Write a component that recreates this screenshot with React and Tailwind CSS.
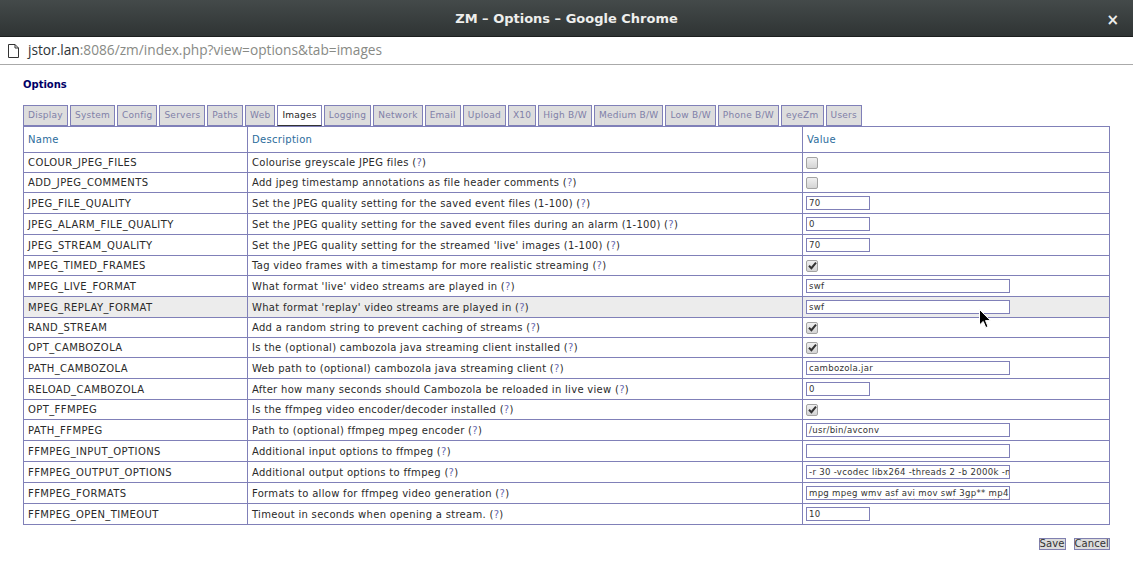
import React from 'react'

const TABS = [
  'Display', 'System', 'Config', 'Servers', 'Paths', 'Web', 'Images', 'Logging', 'Network',
  'Email', 'Upload', 'X10', 'High B/W', 'Medium B/W', 'Low B/W', 'Phone B/W', 'eyeZm', 'Users',
]

const ROWS = [
  { name: 'COLOUR_JPEG_FILES', desc: 'Colourise greyscale JPEG files', type: 'check', on: false },
  { name: 'ADD_JPEG_COMMENTS', desc: 'Add jpeg timestamp annotations as file header comments', type: 'check', on: false },
  { name: 'JPEG_FILE_QUALITY', desc: 'Set the JPEG quality setting for the saved event files (1-100)', type: 'small', value: '70' },
  { name: 'JPEG_ALARM_FILE_QUALITY', desc: 'Set the JPEG quality setting for the saved event files during an alarm (1-100)', type: 'small', value: '0' },
  { name: 'JPEG_STREAM_QUALITY', desc: "Set the JPEG quality setting for the streamed 'live' images (1-100)", type: 'small', value: '70' },
  { name: 'MPEG_TIMED_FRAMES', desc: 'Tag video frames with a timestamp for more realistic streaming', type: 'check', on: true },
  { name: 'MPEG_LIVE_FORMAT', desc: "What format 'live' video streams are played in", type: 'wide', value: 'swf' },
  { name: 'MPEG_REPLAY_FORMAT', desc: "What format 'replay' video streams are played in", type: 'wide', value: 'swf', hover: true },
  { name: 'RAND_STREAM', desc: 'Add a random string to prevent caching of streams', type: 'check', on: true },
  { name: 'OPT_CAMBOZOLA', desc: 'Is the (optional) cambozola java streaming client installed', type: 'check', on: true },
  { name: 'PATH_CAMBOZOLA', desc: 'Web path to (optional) cambozola java streaming client', type: 'wide', value: 'cambozola.jar' },
  { name: 'RELOAD_CAMBOZOLA', desc: 'After how many seconds should Cambozola be reloaded in live view', type: 'small', value: '0' },
  { name: 'OPT_FFMPEG', desc: 'Is the ffmpeg video encoder/decoder installed', type: 'check', on: true },
  { name: 'PATH_FFMPEG', desc: 'Path to (optional) ffmpeg mpeg encoder', type: 'wide', value: '/usr/bin/avconv' },
  { name: 'FFMPEG_INPUT_OPTIONS', desc: 'Additional input options to ffmpeg', type: 'wide', value: '' },
  { name: 'FFMPEG_OUTPUT_OPTIONS', desc: 'Additional output options to ffmpeg', type: 'wide', value: '-r 30 -vcodec libx264 -threads 2 -b 2000k -minrate 800k -maxrate 5000k' },
  { name: 'FFMPEG_FORMATS', desc: 'Formats to allow for ffmpeg video generation', type: 'formats' },
  { name: 'FFMPEG_OPEN_TIMEOUT', desc: 'Timeout in seconds when opening a stream.', type: 'small', value: '10' },
]

const FONT = "font-['DejaVu_Sans',sans-serif]"

const Checkbox = ({ on }) => (
  <span className="flex h-[12px] w-[12px] items-center justify-center rounded-[2px] border border-[#a3a3a3] bg-gradient-to-b from-[#f0f0f0] to-[#d4d4d4]">
    {on && (
      <svg width="9" height="9" viewBox="0 0 9 9">
        <path d="M1 4.8 L3.4 7.2 L8 1.6" fill="none" stroke="#333" strokeWidth="2" />
      </svg>
    )}
  </span>
)

// input boxes use a narrower face so the long ffmpeg values clip like the browser did
const Field = ({ wide, children }) => (
  <div
    className={`h-[14px] overflow-hidden whitespace-nowrap border border-[#8080b8] bg-white pl-[2px] font-['DejaVu_Sans_Condensed','Liberation_Sans',sans-serif] text-[9.5px] leading-[12px] text-[#333] ${wide ? 'w-[204px]' : 'w-[64px]'}`}
  >
    {children}
  </div>
)

const Spell = ({ children }) => (
  <span className="underline decoration-[#e02020] decoration-wavy decoration-1 underline-offset-2">{children}</span>
)

const Value = ({ row }) => {
  if (row.type === 'check') return <Checkbox on={row.on} />
  if (row.type === 'small') return <Field>{row.value}</Field>
  if (row.type === 'formats')
    return (
      <Field wide>
        mpg mpeg <Spell>wmv</Spell> <Spell>asf</Spell> <Spell>avi</Spell> <Spell>mov</Spell> <Spell>swf</Spell> <Spell>3gp</Spell>** <Spell>mp4</Spell>
      </Field>
    )
  return <Field wide>{row.value}</Field>
}

const Cursor = () => (
  <svg className="pointer-events-none absolute left-[979px] top-[309px]" width="13" height="20" viewBox="0 0 13 20">
    <path d="M0.5 0.5 L0.5 16 L4.2 12.4 L6.8 18.6 L9 17.6 L6.5 11.6 L11.5 11.6 Z" fill="#000" stroke="#fff" strokeWidth="1" />
  </svg>
)

export default function App() {
  return (
    <div className={`relative h-[574px] w-[1133px] overflow-hidden bg-white ${FONT}`}>
      {/* window title bar */}
      <div className="relative flex h-[37px] items-center justify-center border-b border-[#1c1f1f] bg-gradient-to-b from-[#444a4a] to-[#2f3434]">
        <span className="pt-[1px] text-[13px] font-bold text-[#eeeeec]">ZM – Options – Google Chrome</span>
        <span className="absolute right-[14px] top-[9px] text-[15px] font-bold text-[#eeeeec]">×</span>
      </div>

      {/* address bar */}
      <div className="flex h-[28px] items-center gap-[9px] border-b border-[#aaaaaa] pl-[8px]">
        <svg width="11" height="14" viewBox="0 0 11 14">
          <path d="M0.5 0.5 H7 L10.5 4 V13.5 H0.5 Z M7 0.5 V4 H10.5" fill="none" stroke="#333" strokeWidth="1" />
        </svg>
        <span className="font-['Open_Sans',sans-serif] text-[13.7px] text-[#888a85]">
          <span className="text-[#2e3436]">jstor.lan</span>:8086/zm/index.php?view=options&amp;tab=images
        </span>
      </div>

      {/* page */}
      <div className="px-[23px] pt-[13px]">
        <h2 className="text-[10px] font-bold leading-[14px] text-[#000066]">Options</h2>

        <div className="mt-[13px] flex gap-[2px]">
          {TABS.map((t) => (
            <div
              key={t}
              className={`flex h-[21px] items-center border border-[#8080b8] px-[4px] text-[9px] tracking-[0.25px] ${
                t === 'Images'
                  ? 'border-b-[#333] border-b-dotted bg-white text-[#222]'
                  : 'bg-[#dddddd] text-[#8080a8]'
              }`}
            >
              {t}
            </div>
          ))}
        </div>

        <div className="border-x border-t border-[#8080b8] text-[10px] tracking-[0.3px] text-[#2a2a2a]">
          <div className="flex h-[26px] border-b border-[#8080b8] text-[#2b6c9c]">
            <div className="flex w-[224px] items-center border-r border-[#8080b8] pl-[4px]">Name</div>
            <div className="flex w-[555px] items-center border-r border-[#8080b8] pl-[4px]">Description</div>
            <div className="flex flex-1 items-center pl-[4px]">Value</div>
          </div>
          {ROWS.map((r) => (
            <div
              key={r.name}
              className={`flex border-b border-[#8080b8] ${r.type === 'check' ? 'h-[20px]' : 'h-[21px]'} ${
                r.hover ? 'bg-[#ececec]' : ''
              }`}
            >
              <div className="flex w-[224px] items-center border-r border-[#8080b8] pl-[4px] tracking-[0.4px]">{r.name}</div>
              <div className="flex w-[555px] items-center border-r border-[#8080b8] pl-[4px]">
                {r.desc}&nbsp;(<span className="text-[#6a6ab0]">?</span>)
              </div>
              <div className="flex flex-1 items-center pl-[3px]">
                <Value row={r} />
              </div>
            </div>
          ))}
        </div>

        <div className="mt-[13px] flex justify-end gap-[8px]">
          {['Save', 'Cancel'].map((b) => (
            <button
              key={b}
              className="flex h-[12px] items-center border border-[#8080b0] bg-[#dcdcdc] px-0 text-[10px] leading-none tracking-[0.1px] text-[#333]"
            >
              {b}
            </button>
          ))}
        </div>
      </div>

      <Cursor />
    </div>
  )
}
